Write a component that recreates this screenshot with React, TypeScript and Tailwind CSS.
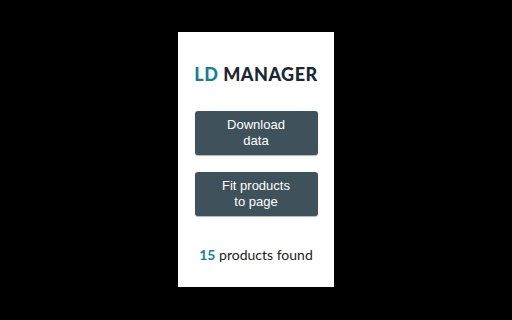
export default function App() {
  return (
    <main className="flex h-[320px] w-[512px] items-start justify-center bg-black pt-[32px]">
      <div className="flex h-[255px] w-[156px] flex-col items-center bg-white">
        <h1 className="mt-[33px] whitespace-nowrap font-['Lato',sans-serif] text-[18px] font-black leading-[18px] tracking-[0.5px] text-[#1d2730]">
          <span className="text-[#1a7d94]">LD</span> MANAGER
        </h1>
        <button className="mt-[28px] flex h-[44px] w-[123px] items-center justify-center rounded-[3px] bg-[#3f525b] px-2 font-['Liberation_Sans',Arial,sans-serif] text-[13px] leading-[16px] text-white shadow-[0_1px_1px_rgba(0,0,0,0.3)]">
          Download
          <br />
          data
        </button>
        <button className="mt-[17px] flex h-[44px] w-[123px] items-center justify-center rounded-[3px] bg-[#3f525b] px-2 font-['Liberation_Sans',Arial,sans-serif] text-[13px] leading-[16px] text-white shadow-[0_1px_1px_rgba(0,0,0,0.3)]">
          Fit products
          <br />
          to page
        </button>
        <p className="mt-[31px] whitespace-nowrap font-['Lato',sans-serif] text-[14px] leading-[16px] text-[#222]">
          <span className="font-bold text-[#1a7d94]">15</span> products found
        </p>
      </div>
    </main>
  );
}
